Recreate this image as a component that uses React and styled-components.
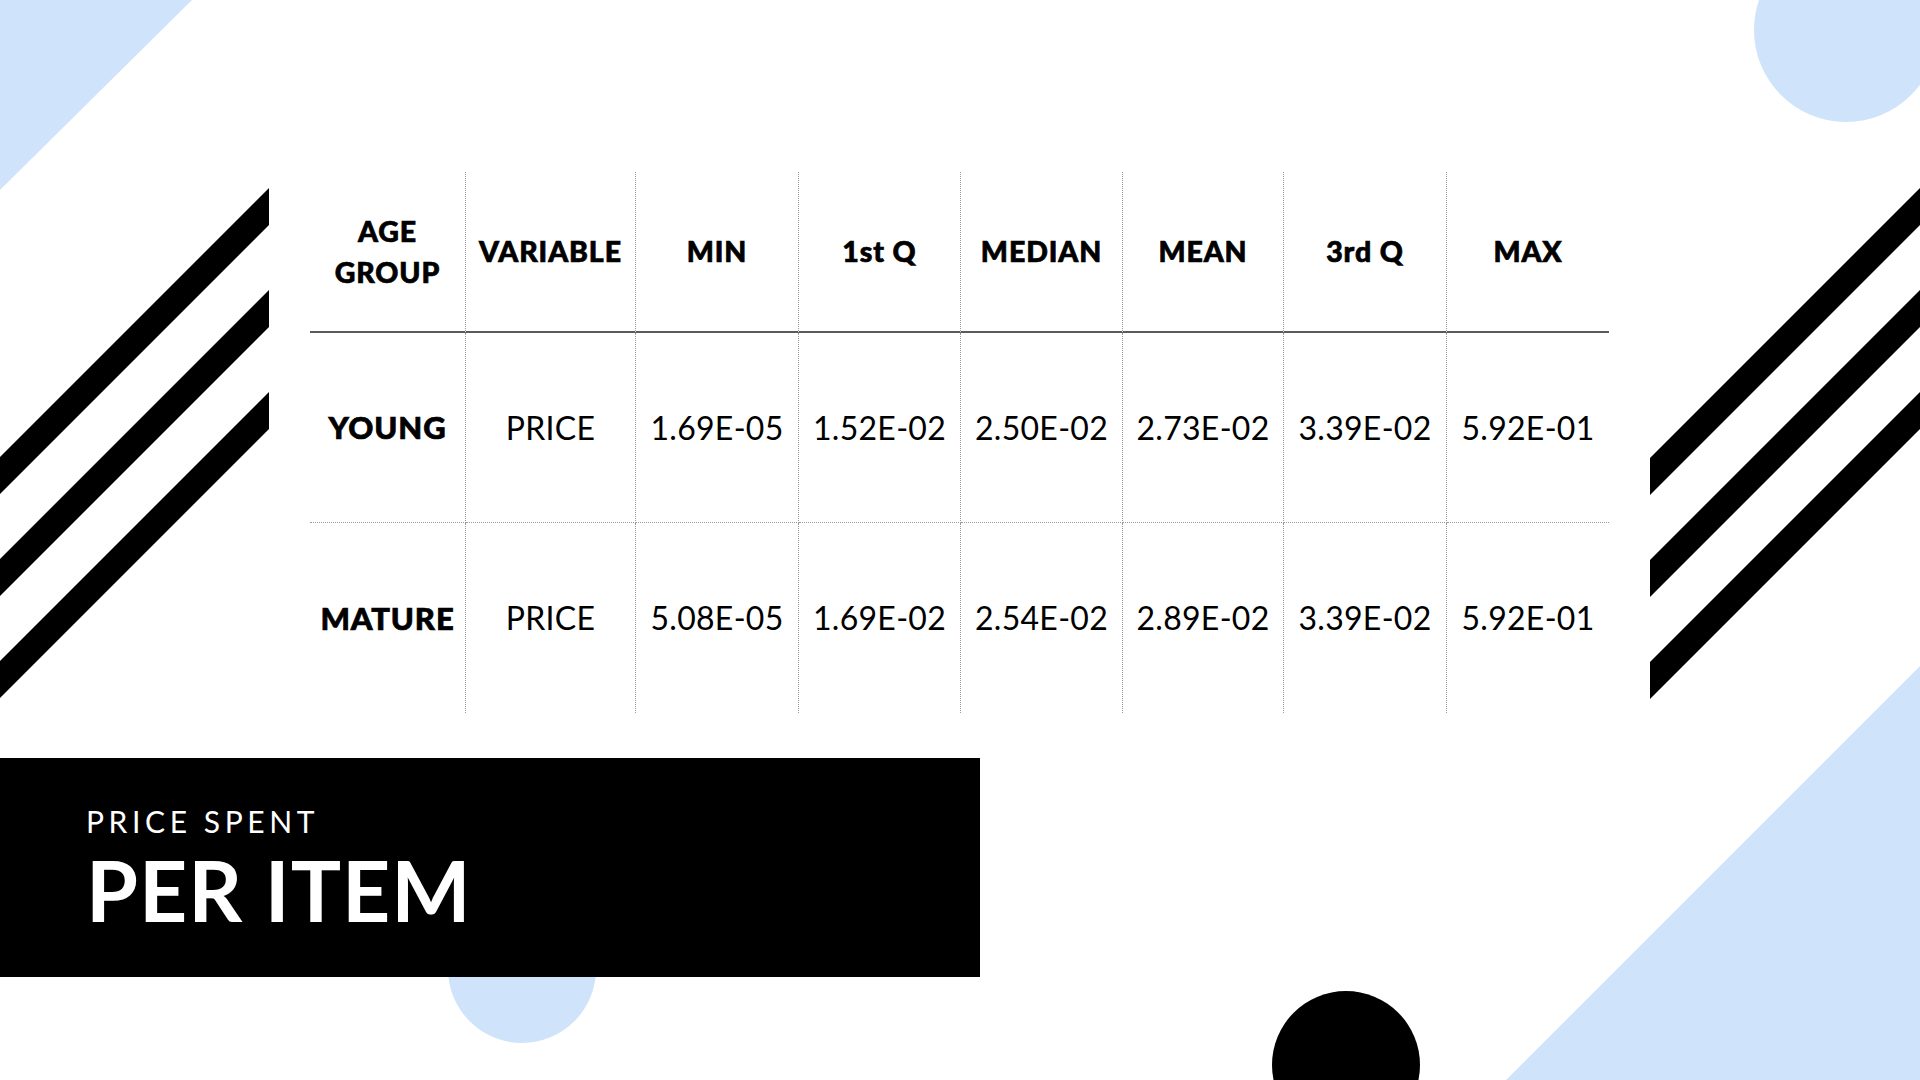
import React from 'react'
import styled, { createGlobalStyle } from 'styled-components'

const GlobalStyle = createGlobalStyle`
  html, body {
    margin: 0;
    padding: 0;
    background: #ffffff;
  }
  body {
    font-family: Lato, "Open Sans", "Liberation Sans", sans-serif;
    color: #000;
  }
`

const BLUE = '#cfe3fa'

const Slide = styled.div`
  position: relative;
  width: 1920px;
  height: 1080px;
  overflow: hidden;
  background: #fff;
  display: flex;
  flex-direction: column;
  align-items: flex-start;
  padding-top: 172px;
  box-sizing: border-box;
`

// decorations on the free canvas
const Triangle = styled.div`
  position: absolute;
  background: ${BLUE};
  left: ${p => p.left}px;
  top: ${p => p.top}px;
  width: ${p => p.size}px;
  height: ${p => p.size}px;
  clip-path: ${p => p.clip};
`

const Circle = styled.div`
  position: absolute;
  left: ${p => p.cx - p.r}px;
  top: ${p => p.cy - p.r}px;
  width: ${p => p.r * 2}px;
  height: ${p => p.r * 2}px;
  border-radius: 50%;
  background: ${p => p.color};
`

const StripeArt = styled.svg`
  position: absolute;
  top: 188px;
  left: ${p => p.left}px;
`

const Table = styled.div`
  position: relative;
  z-index: 1;
  margin-left: 310px;
  display: grid;
  grid-template-columns: 156px 170px 163px 162px 162px 161px 163px 162px;
  grid-template-rows: 161px 190px 190px;
`

const Cell = styled.div`
  display: flex;
  align-items: center;
  justify-content: center;
  text-align: center;
  font-size: ${p => (p.head ? '28.5px' : p.bold ? '31px' : '32px')};
  font-weight: ${p => (p.bold ? 900 : 400)};
  -webkit-text-stroke: ${p => (p.bold ? '0.7px #000' : '0')};
  line-height: ${p => (p.head ? '41px' : '1')};
  letter-spacing: ${p => (p.bold ? '0.9px' : '0.3px')};
  white-space: nowrap;
  border-right: ${p => (p.last ? 'none' : '1px dotted #9a9a9a')};
  border-bottom: ${p =>
    p.head ? '2px solid #5a5a5a' : p.divide ? '1px dotted #9a9a9a' : 'none'};
  box-sizing: border-box;
`

const Banner = styled.div`
  position: relative;
  z-index: 2;
  margin-top: 45px;
  width: 980px;
  height: 219px;
  background: #000;
  color: #fff;
  display: flex;
  flex-direction: column;
  padding: 48px 0 0 86px;
  box-sizing: border-box;
`

const Kicker = styled.div`
  font-size: 30px;
  font-weight: 400;
  line-height: 1;
  letter-spacing: 4.6px;
`

const Title = styled.div`
  margin-top: 22px;
  font-size: 84px;
  font-weight: 700;
  line-height: 0.75;
  letter-spacing: 1px;
`

const Stripes = ({ left, mirror }) => {
  const bands = [0, 102, 204]
  return (
    <StripeArt left={left} width="270" height="512" viewBox="0 0 270 512">
      {bands.map(d =>
        mirror ? (
          <polygon
            key={d}
            points={`0,${270 + d} 270,${d} 270,${37 + d} 0,${307 + d}`}
            fill="#000"
          />
        ) : (
          <polygon
            key={d}
            points={`270,${d} 270,${37 + d} 0,${307 + d} 0,${270 + d}`}
            fill="#000"
          />
        )
      )}
    </StripeArt>
  )
}

const header = ['AGE\nGROUP', 'VARIABLE', 'MIN', '1st Q', 'MEDIAN', 'MEAN', '3rd Q', 'MAX']

const rows = [
  ['YOUNG', 'PRICE', '1.69E-05', '1.52E-02', '2.50E-02', '2.73E-02', '3.39E-02', '5.92E-01'],
  ['MATURE', 'PRICE', '5.08E-05', '1.69E-02', '2.54E-02', '2.89E-02', '3.39E-02', '5.92E-01'],
]

const App = () => {
  return (
    <Slide>
      <GlobalStyle />
      <Triangle left={0} top={0} size={192} clip="polygon(0 0, 100% 0, 0 99%)" />
      <Triangle left={1506} top={666} size={414} clip="polygon(100% 0, 100% 100%, 0 100%)" />
      <Circle cx={1846} cy={30} r={92} color={BLUE} />
      <Circle cx={522} cy={969} r={74} color={BLUE} />
      <Circle cx={1346} cy={1065} r={74} color="#000" />
      <Stripes left={-1} />
      <Stripes left={1650} mirror />

      <Table>
        {header.map((h, i) => (
          <Cell key={h} head bold last={i === header.length - 1}>
            {h.split('\n').map((line, j) => (
              <React.Fragment key={line}>
                {j > 0 && <br />}
                {line}
              </React.Fragment>
            ))}
          </Cell>
        ))}
        {rows.map((row, r) =>
          row.map((v, i) => (
            <Cell
              key={`${r}-${i}`}
              bold={i === 0}
              divide={r === 0}
              last={i === row.length - 1}
            >
              {v}
            </Cell>
          ))
        )}
      </Table>

      <Banner>
        <Kicker>PRICE SPENT</Kicker>
        <Title>PER ITEM</Title>
      </Banner>
    </Slide>
  )
}

export default App
